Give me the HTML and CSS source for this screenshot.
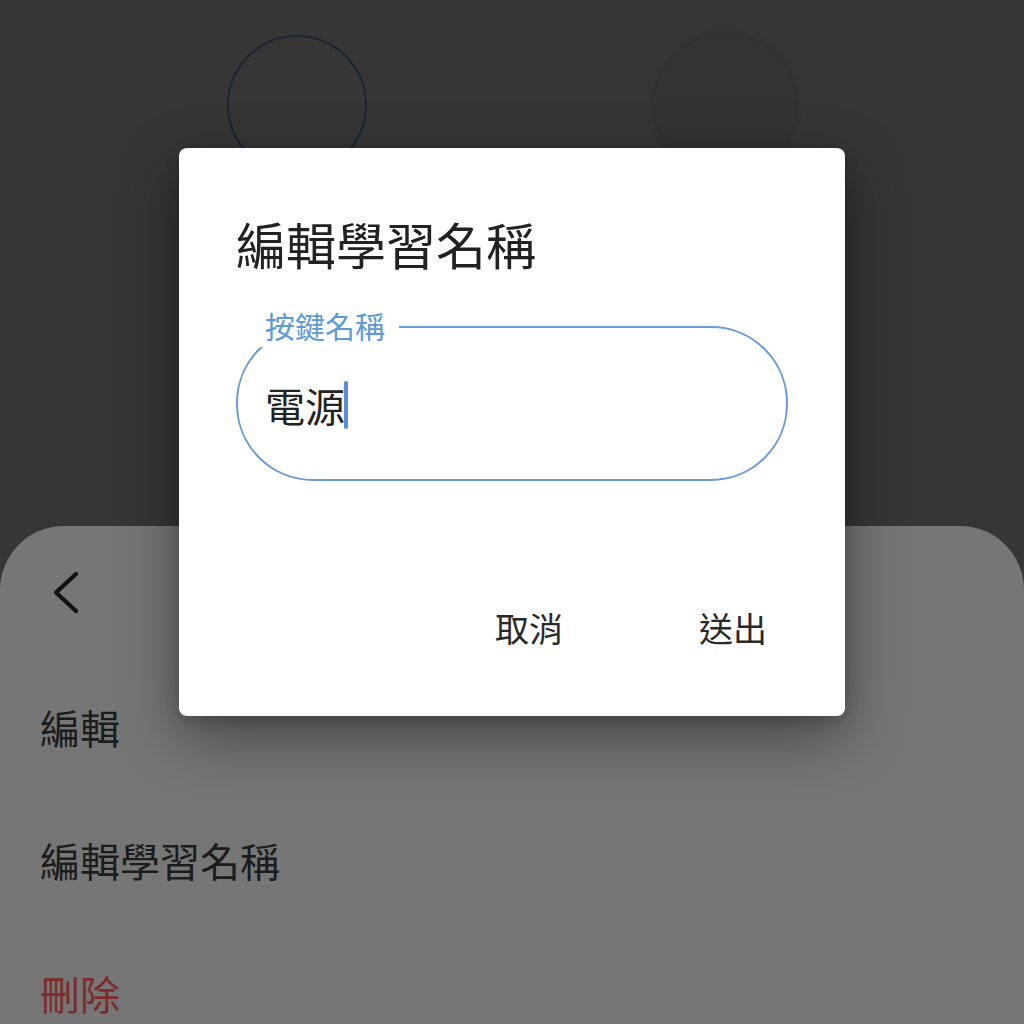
FILE: index.html
```html
<!DOCTYPE html>
<html lang="zh-Hant">
<head>
<meta charset="utf-8">
<title>編輯學習名稱</title>
<link rel="stylesheet" href="styles.css">
</head>
<body>
<div class="screen">
  <div class="remote">
    <div class="ring ring-outline"></div>
    <div class="ring ring-solid"></div>
  </div>
  <div class="sheet">
    <div class="sheet-header">
      <svg class="back" viewBox="0 0 48 50" width="48" height="50">
        <path d="M36 6 L16 24.5 L36 43" fill="none" stroke="#111" stroke-width="4.2" stroke-linecap="round" stroke-linejoin="round"/>
      </svg>
    </div>
    <div class="item">編輯</div>
    <div class="item">編輯學習名稱</div>
    <div class="item danger">刪除</div>
  </div>

  <div class="dialog">
    <div class="dialog-title">編輯學習名稱</div>
    <fieldset class="field">
      <legend class="field-label">按鍵名稱</legend>
      <div class="field-input">電源<span class="caret"></span></div>
    </fieldset>
    <div class="actions">
      <button class="btn">取消</button>
      <button class="btn">送出</button>
    </div>
  </div>
</div>
</body>
</html>
```

FILE: styles.css
```css
html, body {
  margin: 0;
  padding: 0;
  background: #363636;
}
body {
  font-family: "Noto Sans CJK TC", "Noto Sans", sans-serif;
  color: #222;
}
.screen {
  position: relative;
  width: 1024px;
  height: 1024px;
  overflow: hidden;
  display: flex;
  flex-direction: column;
}
.remote {
  flex: none;
  height: 526px;
  box-sizing: border-box;
  padding: 35px 0 0 227px;
  display: flex;
  align-items: flex-start;
  gap: 286px;
}
.ring {
  border-radius: 50%;
  box-sizing: border-box;
}
.ring-outline {
  width: 140px;
  height: 140px;
  border: 2px solid #1c2437;
}
.ring-solid {
  width: 144px;
  height: 144px;
  margin-top: -2px;
  background: #333333;
  border: 1px solid #313131;
  box-shadow: 0 0 6px rgba(0,0,0,0.12);
}
.sheet {
  flex: none;
  height: 498px;
  background: #767676;
  border-radius: 64px 64px 0 0;
  display: flex;
  flex-direction: column;
}
.sheet-header {
  flex: none;
  height: 134px;
  box-sizing: border-box;
  padding: 42px 0 0 40px;
}
.back {
  display: block;
}
.item {
  height: 133px;
  flex: none;
  display: flex;
  align-items: center;
  padding-left: 40px;
  font-size: 40px;
  line-height: 48px;
  color: #1c1c1c;
}
.item.danger {
  color: #7e2b2b;
}
.dialog {
  position: absolute;
  left: 179px;
  top: 148px;
  width: 666px;
  height: 568px;
  box-sizing: border-box;
  background: #ffffff;
  border-radius: 8px;
  box-shadow: 0 20px 60px rgba(0,0,0,0.42), 0 4px 14px rgba(0,0,0,0.18);
  padding: 65px 57px 63px;
  display: flex;
  flex-direction: column;
}
.dialog-title {
  font-size: 50px;
  line-height: 60px;
  color: #222;
}
.field {
  margin: 34px 0 0;
  padding: 0;
  border: 2px solid #6a9bd8;
  border-radius: 77px;
  min-width: 0;
}
.field-label {
  margin-left: 17px;
  padding: 0 14px 4px 10px;
  font-size: 30px;
  line-height: 36px;
  color: #5d9ad8;
}
.field-input {
  padding: 34px 0 50px 27px;
  font-size: 40px;
  line-height: 48px;
  color: #222;
  display: flex;
  align-items: center;
}
.caret {
  display: inline-block;
  width: 4px;
  height: 48px;
  margin-left: -1px;
  background: #5a8fd6;
  border-radius: 2px;
}
.actions {
  margin-top: auto;
  display: flex;
  justify-content: flex-end;
  gap: 94px;
}
.btn {
  font-family: inherit;
  font-size: 34px;
  line-height: 51px;
  color: #2a2a2a;
  background: none;
  border: none;
  padding: 0 21px;
  margin: 0;
}
```
